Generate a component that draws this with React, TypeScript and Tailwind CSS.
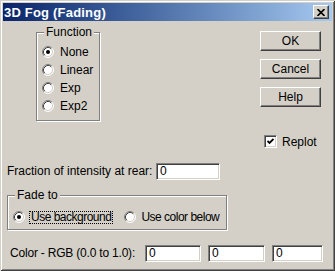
import React from "react";

const raised =
  "border border-t-white border-l-white border-r-[#404040] border-b-[#404040] shadow-[inset_-1px_-1px_0_#808080]";
const sunken =
  "border border-t-[#808080] border-l-[#808080] border-r-white border-b-white shadow-[inset_1px_1px_0_#404040,inset_-1px_-1px_0_#D4D0C8]";

const Radio = ({ checked = false }: { checked?: boolean }) => (
  <svg width="12" height="12" viewBox="0 0 12 12" className="shrink-0">
    <circle cx="6" cy="6" r="5" fill="#fff" />
    <path d="M2.11 9.89 A5.5 5.5 0 0 1 9.89 2.11" fill="none" stroke="#808080" />
    <path d="M9.89 2.11 A5.5 5.5 0 0 1 2.11 9.89" fill="none" stroke="#fff" />
    <path d="M2.82 9.18 A4.5 4.5 0 0 1 9.18 2.82" fill="none" stroke="#404040" />
    <path d="M9.18 2.82 A4.5 4.5 0 0 1 2.82 9.18" fill="none" stroke="#D4D0C8" />
    {checked && <circle cx="6" cy="6" r="2" fill="#000" />}
  </svg>
);

const GroupBox = ({
  label,
  className,
  children,
}: {
  label: string;
  className: string;
  children: React.ReactNode;
}) => (
  <div
    className={`relative border border-[#808080] shadow-[inset_1px_1px_0_#fff,1px_1px_0_#fff] ${className}`}
  >
    <span className="absolute -top-[8px] left-[7px] bg-[#D4D0C8] px-[2px] leading-[14px]">
      {label}
    </span>
    {children}
  </div>
);

const Button = ({ label }: { label: string }) => (
  <button
    className={`w-[61px] h-[20px] bg-[#D4D0C8] flex items-center justify-center leading-none ${raised}`}
  >
    {label}
  </button>
);

const Field = ({ value, className }: { value: string; className: string }) => (
  <div
    className={`h-[17px] bg-white flex items-center pl-[3px] leading-none ${sunken} ${className}`}
  >
    {value}
  </div>
);

export default function App() {
  const functions = ["None", "Linear", "Exp", "Exp2"];

  return (
    <div className="w-[335px] h-[271px] bg-[#D4D0C8] p-[3px] flex flex-col text-[12px] text-black font-['Liberation_Sans',Arial,sans-serif] shadow-[inset_1px_1px_0_#D4D0C8,inset_-1px_-1px_0_#404040,inset_2px_2px_0_#fff,inset_-2px_-2px_0_#808080]">
      {/* title bar */}
      <div className="h-[18px] flex items-center bg-linear-to-r from-[#0A246A] to-[#A6CAF0] pl-[1px] pr-[3px]">
        <span className="text-white font-bold text-[13px] leading-none tracking-[0.2px]">
          3D Fog (Fading)
        </span>
        <div
          className={`ml-auto w-[16px] h-[14px] bg-[#D4D0C8] flex items-center justify-center ${raised}`}
        >
          <svg width="8" height="7" viewBox="0 0 8 7">
            <path d="M0.5 0 L7.5 7 M7.5 0 L0.5 7" stroke="#000" strokeWidth="1.6" />
          </svg>
        </div>
      </div>

      <div className="flex">
        <GroupBox label="Function" className="ml-[33px] mt-[11px] w-[64px] h-[89px]">
          <div className="flex flex-col pt-[10px] pl-[5px]">
            {functions.map((f, i) => (
              <div key={f} className="h-[18px] flex items-center gap-[6px]">
                <Radio checked={i === 0} />
                <span>{f}</span>
              </div>
            ))}
          </div>
        </GroupBox>

        <div className="ml-auto mr-[11px] mt-[10px] flex flex-col">
          <div className="flex flex-col gap-[8px]">
            <Button label="OK" />
            <Button label="Cancel" />
            <Button label="Help" />
          </div>
          <div className="mt-[28px] ml-[4px] h-[13px] flex items-center gap-[5px]">
            <div className={`w-[13px] h-[13px] bg-white flex items-center justify-center ${sunken}`}>
              <svg width="7" height="7" viewBox="0 0 7 7">
                <path d="M0.5 3 L2.5 5 L6.5 1" fill="none" stroke="#000" strokeWidth="1.8" />
              </svg>
            </div>
            <span>Replot</span>
          </div>
        </div>
      </div>

      <div className="mt-[14px] flex items-center pl-[4px]">
        <span className="w-[149px]">Fraction of intensity at rear:</span>
        <Field value="0" className="w-[64px]" />
      </div>

      <GroupBox label="Fade to" className="ml-[4px] mt-[15px] w-[220px] h-[35px]">
        <div className="flex items-center pt-[12px] pl-[5px] tracking-[-0.5px]">
          <Radio checked />
          <span className="ml-[4px] px-[1px] h-[13px] flex items-center border border-dotted border-black">
            Use background
          </span>
          <span className="ml-[11px] flex items-center gap-[5px]">
            <Radio />
            <span>Use color below</span>
          </span>
        </div>
      </GroupBox>

      <div className="mt-[14px] flex items-center pl-[7px]">
        <span className="w-[135px] tracking-[-0.2px]">Color - RGB (0.0 to 1.0):</span>
        <Field value="0" className="w-[56px]" />
        <Field value="0" className="ml-[7px] w-[57px]" />
        <Field value="0" className="ml-[7px] w-[51px]" />
      </div>
    </div>
  );
}
